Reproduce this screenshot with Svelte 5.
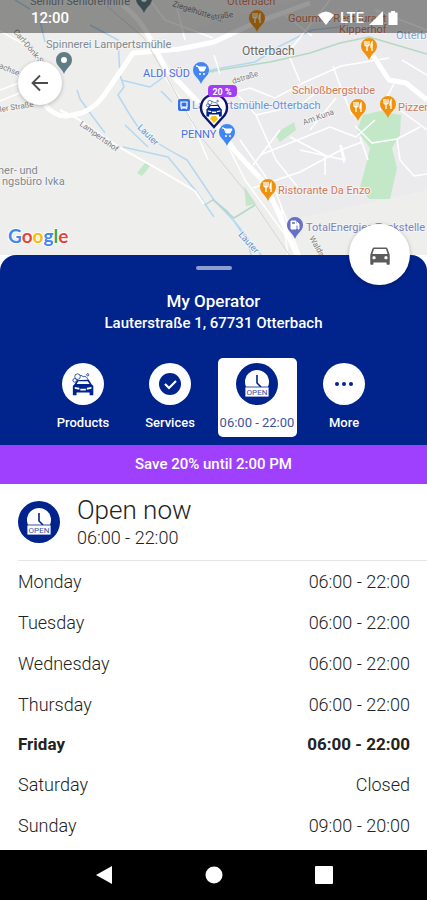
<script>
  const days = [
    { name: 'Monday', hours: '06:00 - 22:00' },
    { name: 'Tuesday', hours: '06:00 - 22:00' },
    { name: 'Wednesday', hours: '06:00 - 22:00' },
    { name: 'Thursday', hours: '06:00 - 22:00' },
    { name: 'Friday', hours: '06:00 - 22:00' },
    { name: 'Saturday', hours: 'Closed' },
    { name: 'Sunday', hours: '09:00 - 20:00' }
  ];

  const today = 'Friday';

  const tabs = [
    { id: 'products', label: 'Products' },
    { id: 'services', label: 'Services' },
    { id: 'hours', label: '06:00 - 22:00' },
    { id: 'more', label: 'More' }
  ];

  let active = $state('hours');

  // x / y is the tip of the pin
  const pins = [
    { x: 144, y: 13, kind: 'place' },
    { x: 64, y: 74, kind: 'place' },
    { x: 257, y: 32, kind: 'food' },
    { x: 369, y: 60, kind: 'food' },
    { x: 358, y: 121, kind: 'food' },
    { x: 388, y: 118, kind: 'food' },
    { x: 268, y: 201, kind: 'food' },
    { x: 201, y: 84, kind: 'shop' },
    { x: 227, y: 146, kind: 'shop' },
    { x: 295, y: 239, kind: 'fuel' }
  ];

  const pinColors = {
    place: '#607d86',
    food: '#f0920e',
    shop: '#4285f4',
    fuel: '#6570c6'
  };

  const labels = [
    { x: 30, y: 5, text: 'Senluri Seniorenhilfe', kind: 'place' },
    { x: 46, y: 48, text: 'Spinnerei Lampertsmühle', kind: 'place' },
    { x: -2, y: 174, text: 'ner- und', kind: 'place' },
    { x: 2, y: 185, text: 'ngsbüro Ivka', kind: 'place' },
    { x: 227, y: 5, text: 'Otterbach', kind: 'food' },
    { x: 288, y: 22, text: 'Gourmet Restaurant', kind: 'food' },
    { x: 339, y: 33, text: 'Kipperhof', kind: 'food' },
    { x: 292, y: 94, text: 'Schloßbergstube', kind: 'food' },
    { x: 398, y: 111, text: 'Pizzeria', kind: 'food' },
    { x: 278, y: 194, text: 'Ristorante Da Enzo', kind: 'food' },
    { x: 143, y: 77, text: 'ALDI SÜD', kind: 'shop' },
    { x: 181, y: 138, text: 'PENNY', kind: 'shop' },
    { x: 192, y: 109, text: 'Lampertsmühle-Otterbach', kind: 'station' },
    { x: 306, y: 231, text: 'TotalEnergies Tankstelle', kind: 'fuel' },
    { x: 396, y: 39, text: 'Otterbach', kind: 'stream' }
  ];

  const streets = [
    { x: 13, y: 32, angle: 50, text: 'Carl-Dönk-Str.' },
    { x: -6, y: 66, angle: 22, text: 'Sachse' },
    { x: -6, y: 113, angle: -9, text: 'eiler Straße' },
    { x: 79, y: 125, angle: 36, text: 'Lampertshof' },
    { x: 172, y: 6, angle: 18, text: 'Ziegelhütterstr.' },
    { x: 233, y: 84, angle: -18, text: 'dstraße' },
    { x: 304, y: 125, angle: -20, text: 'Am Kuna' },
    { x: 309, y: 238, angle: 60, text: 'Waldstr' },
    { x: 211, y: 20, angle: -8, text: 'straße' }
  ];
</script>

{#snippet openIcon()}
  <svg class="open-icon" viewBox="0 0 42 42" aria-hidden="true">
    <circle cx="21" cy="21" r="21" fill="#00238c" />
    <circle cx="21" cy="19" r="12" fill="#fff" />
    <path d="M21 12v8l4 4" fill="none" stroke="#00238c" stroke-width="1.6" />
    <rect x="9" y="24" width="24" height="10" fill="#fff" stroke="#00238c" stroke-width=".8" />
    <text x="21" y="32" text-anchor="middle" font-size="8" fill="#3a52a6">OPEN</text>
  </svg>
{/snippet}

{#snippet washIcon()}
  <path
    fill="#00238c"
    fill-rule="evenodd"
    d="M4 13l3-5h12l3 5 2 2v10h-4v-3H6v3H2V15zM6 13h14l-2-3H8zM4 16v2l5 1v-2zM22 16v2l-5 1v-2zM10 18v2h6v-2z"
  />
  <path d="M7 9q-2-3 1-4 3-3 5 0 4-1 5 3" fill="#fff" stroke="#00238c" stroke-width=".8" />
  <circle cx="7" cy="5" r="3" fill="#fff" stroke="#00238c" stroke-width=".8" />
  <circle cx="4" cy="9" r="2" fill="#fff" stroke="#00238c" stroke-width=".8" />
  <circle cx="18" cy="3" r="1.2" fill="none" stroke="#00238c" stroke-width=".8" />
{/snippet}

<div class="screen">
  <section class="map-area">
    <svg class="map" viewBox="0 0 427 255" preserveAspectRatio="xMidYMin slice" role="img" aria-label="Map of Otterbach">
      <rect width="427" height="255" fill="#eeeeed" />
      <path d="M150 40 300 0H427V190L290 220 228 140z" fill="#ebebed" />

      <g fill="#c3e8c8">
        <path d="M363 115 380 111 401 115 400 135 392 148 397 168 390 199 369 199 360 187 366 165 370 148 357 130z" />
        <path d="M276 136 281 130 294 122 296 130 280 142z" />
        <path d="M145 163l5 3-8 10-5-3z" />
        <path d="M244 186l12 18-10 2z" />
      </g>

      <g class="water">
        <path d="M15 0 30 9M40 20 45 42M90 25 118 40 120 75 124 87 118 95 130 115 142 133" />
        <path d="M121 80 150 87 165 76M161 91 172 102M77 90 80 99 93 117 105 133M125 125 148 147" />
        <path d="M142 133Q158 144 187 160L214 200 235 222 262 256M123 147 168 157 196 191 214 217M214 200 227 211 247 240 252 258" />
        <path d="M205 71 255 62 280 46 312 30 340 27 360 10M200 70 214 72" />
      </g>

      <g class="trail">
        <path d="M207 72 270 62 310 53 340 43 369 37 427 54M205 205 214 199M213 200 234 218 255 205" />
      </g>

      <g class="lane">
        <path d="M0 66 22 77M0 90 27 80M0 101 22 92M150 0 165 20 213 38M185 40 175 0M160 70 185 105 208 160M225 140 245 180 300 255" />
        <path d="M0 31 30 48 45 70M214 55 220 74M290 50 330 0M375 10 427 30M285 15 312 36" />
        <path d="M214 98 250 88 275 98 305 82 341 66 389 58M290 58 300 82M333 66 341 88 352 115M300 255 275 190 240 140" />
        <path d="M235 92 256 115 276 160 300 190M256 115 300 105 320 90M260 155 330 127 356 137 375 120M300 150 345 160 341 145M290 137 325 155 325 175" />
        <path d="M253 188 300 172 341 150 362 142M310 130 336 98M355 126 372 143 397 139 420 127M397 139 400 160 414 176 427 174" />
        <path d="M340 145 344 163M360 137 368 160M281 205 288 255M253 165 280 130M400 110 427 130M394 84 380 110M402 60 427 75" />
      </g>

      <g class="road">
        <path d="M116 0Q142 18 153 45L166 69 208 112 235 151 262 180 275 205 298 258" />
        <path d="M45 105Q55 117 67 116L82 113Q97 107 107 91L133 53 157 51 180 49 214 42 250 25 310 3" />
        <path d="M372 54 389 80 406 83 427 100" />
        <path class="thin" d="M60 110 78 119 119 147 163 172 195 191 204 204" />
      </g>
      <path d="M100 0 144 38 201 137 250 197 290 256" fill="none" stroke="#d3d5d6" stroke-width="1" />

      {#each streets as s}
        <text class="street" transform="translate({s.x} {s.y}) rotate({s.angle})">{s.text}</text>
      {/each}
      <text class="river" transform="translate(137 128) rotate(45)">Lauter</text>
      <text class="river" transform="translate(238 235) rotate(48)">Lauter</text>

      {#each labels as l}
        <text class="label {l.kind}" x={l.x} y={l.y}>{l.text}</text>
      {/each}
      <text class="label town" x="242" y="55">Otterbach</text>

      <g transform="translate(178 99)">
        <rect width="12" height="12" rx="2" fill="#3470e8" />
        <path d="M3 3h6v5H3zM3 10l1-1h4l1 1" fill="none" stroke="#fff" stroke-width="1.2" />
      </g>

      {#each pins as p}
        <g transform="translate({p.x} {p.y})">
          <path d="M0 0C-2-6-8-8-8-14A8 8 0 1 1 8-14C8-8 2-6 0 0z" fill={pinColors[p.kind]} />
          {#if p.kind === 'place'}
            <circle cy="-14" r="3" fill="#fff" />
          {:else if p.kind === 'food'}
            <path d="M-4-19v4q0 1 2 1t2-1v-4M-2-19v10M3-9v-9q-1 1-1 5h1" fill="none" stroke="#fff" stroke-width="1.3" />
          {:else if p.kind === 'shop'}
            <path d="M-5-18h2l2 5h4l2-4h-7z" fill="#fff" stroke="#fff" />
            <circle cx="-1" cy="-10" r="1" fill="#fff" />
            <circle cx="3" cy="-10" r="1" fill="#fff" />
          {:else}
            <path d="M-4-10v-8h5v8zM1-14h2v4h1v-5l-2-2" fill="#fff" stroke="#fff" />
            <path d="M-3-16h3" stroke="#6570c6" stroke-width="1.5" />
          {/if}
        </g>
      {/each}

      <g transform="translate(214 127)">
        <path d="M0 0-9-10A13 13 0 1 1 9-10z" fill="#fff" stroke="#0b1470" stroke-width="2.4" />
        <g transform="translate(-9 -28) scale(.7)">
          {@render washIcon()}
        </g>
        <path d="M0-4-4-8l2-3h4l2 3z" fill="#f4c613" />
      </g>
      <rect x="208" y="85" width="29" height="12" rx="4" fill="#a33cf5" />
      <text class="discount" x="222" y="95">20 %</text>

      <text class="google" x="8" y="243"><tspan fill="#4285f4">G</tspan><tspan fill="#ea4335">o</tspan><tspan fill="#fbbc05">o</tspan><tspan fill="#4285f4">g</tspan><tspan fill="#34a853">l</tspan><tspan fill="#ea4335">e</tspan></text>
    </svg>

    <div class="status-bar">
      <span>12:00</span>
      <div class="status-icons">
        <svg width="18" height="14" viewBox="0 0 18 14" aria-hidden="true"><path d="M9 14 1 4Q9-3 17 4z" fill="#fff" /></svg>
        <span>LTE</span>
        <svg width="14" height="14" viewBox="0 0 14 14" aria-hidden="true"><path d="M14 0v14H0z" fill="#fff" /></svg>
        <svg width="10" height="14" viewBox="0 0 10 14" aria-hidden="true"><path d="M3 0h4v1.500h2.500V14h-9V1.500H3z" fill="#fff" /></svg>
      </div>
    </div>

    <button class="round back" aria-label="Back">
      <svg width="20" height="20" viewBox="0 0 20 20" aria-hidden="true">
        <path d="M18 10H3M10 2.500 2.500 10 10 17.500" fill="none" stroke="#4c4c4c" stroke-width="1.8" />
      </svg>
    </button>
    <button class="round drive" aria-label="Directions">
      <svg width="26" height="26" viewBox="0 0 24 24" aria-hidden="true">
        <path
          fill="#5c5c5c"
          d="M18.920 6.010C18.720 5.420 18.160 5 17.500 5h-11c-.66 0-1.210.42-1.420 1.010L3 12v8c0 .55.45 1 1 1h1c.55 0 1-.45 1-1v-1h12v1c0 .55.45 1 1 1h1c.55 0 1-.45 1-1v-8l-2.080-5.990zM6.500 16c-.83 0-1.500-.67-1.500-1.500S5.670 13 6.500 13s1.500.67 1.500 1.500S7.330 16 6.500 16zm11 0c-.83 0-1.500-.67-1.500-1.500s.67-1.500 1.500-1.500 1.500.67 1.500 1.500-.67 1.500-1.500 1.500zM5 11l1.500-4.500h11L19 11H5z"
        />
      </svg>
    </button>
  </section>

  <section class="sheet">
    <div class="handle"></div>
    <h1>My Operator</h1>
    <p class="address">Lauterstraße 1, 67731 Otterbach</p>

    <nav class="tabs">
      {#each tabs as tab}
        <button class="tab" class:active={active === tab.id} onclick={() => (active = tab.id)}>
          {#if tab.id === 'hours'}
            {@render openIcon()}
          {:else}
            <svg class="tab-icon" viewBox="0 0 42 42" aria-hidden="true">
              <circle cx="21" cy="21" r="21" fill="#fff" />
              {#if tab.id === 'products'}
                <g transform="translate(9 9) scale(.93)">
                  {@render washIcon()}
                </g>
              {:else if tab.id === 'services'}
                <circle cx="21" cy="21" r="11" fill="#00238c" />
                <path d="M16 21l4 4 7-7" fill="none" stroke="#fff" stroke-width="2.2" />
              {:else}
                <g fill="#00238c">
                  <circle cx="14" cy="21" r="2" />
                  <circle cx="21" cy="21" r="2" />
                  <circle cx="28" cy="21" r="2" />
                </g>
              {/if}
            </svg>
          {/if}
          <span>{tab.label}</span>
        </button>
      {/each}
    </nav>
  </section>

  <p class="offer">Save 20% until 2:00 PM</p>

  <section class="hours">
    <div class="now">
      {@render openIcon()}
      <div>
        <h2>Open now</h2>
        <p>06:00 - 22:00</p>
      </div>
    </div>

    <table>
      <tbody>
        {#each days as day}
          <tr class:today={day.name === today}>
            <th scope="row">{day.name}</th>
            <td>{day.hours}</td>
          </tr>
        {/each}
      </tbody>
    </table>
  </section>

  <footer class="system-nav">
    <button aria-label="System back">
      <svg width="18" height="18" viewBox="0 0 18 18" aria-hidden="true"><path d="M17 0v18L1 9z" fill="#fff" /></svg>
    </button>
    <button aria-label="Home">
      <svg width="18" height="18" viewBox="0 0 18 18" aria-hidden="true"><circle cx="9" cy="9" r="8.500" fill="#fff" /></svg>
    </button>
    <button aria-label="Recent apps">
      <svg width="18" height="18" viewBox="0 0 18 18" aria-hidden="true"><rect width="18" height="18" rx="1" fill="#fff" /></svg>
    </button>
  </footer>
</div>

<style>
  :global(body) {
    margin: 0;
    background: #fff;
  }

  .screen {
    display: flex;
    flex-direction: column;
    min-height: 100vh;
    font-family: Roboto, 'Liberation Sans', sans-serif;
    color: #222;
  }

  h1,
  h2,
  p {
    margin: 0;
  }

  button {
    padding: 0;
    border: 0;
    background: none;
    font: inherit;
    cursor: pointer;
  }

  /* Map */
  .map-area {
    position: relative;
    height: 255px;
  }

  .map {
    display: block;
    width: 100%;
    height: 100%;
  }

  .water path,
  .trail path,
  .lane path,
  .road path {
    fill: none;
    stroke-linejoin: round;
  }

  .water path {
    stroke: #b5d8f2;
    stroke-width: 1.5px;
  }

  .trail path {
    stroke: #b5d8c3;
    stroke-width: 1.5px;
  }

  .lane path {
    stroke: #fff;
    stroke-width: 1.5px;
  }

  .road path {
    stroke: #fff;
    stroke-width: 5px;
  }

  .road .thin {
    stroke-width: 2px;
  }

  .label,
  .street,
  .river {
    font-size: 11px;
    stroke: #f4f4f4;
    stroke-width: 2px;
    paint-order: stroke;
  }

  .place {
    fill: #7d8a90;
  }

  .food {
    fill: #d17a55;
  }

  .shop {
    fill: #4a6fe0;
  }

  .station {
    fill: #6a90de;
  }

  .fuel {
    fill: #7b83c2;
  }

  .stream {
    fill: #78a9dc;
  }

  .town {
    font-size: 12px;
    fill: #66696c;
  }

  .street {
    font-size: 8px;
    fill: #7c7c7c;
  }

  .river {
    font-size: 9px;
    fill: #5d93cc;
  }

  .discount {
    font-size: 9px;
    font-weight: 700;
    fill: #fff;
    text-anchor: middle;
  }

  .google {
    font-family: Lato, sans-serif;
    font-size: 19px;
    font-weight: 700;
    stroke: #fff;
    stroke-width: 2px;
    paint-order: stroke;
  }

  .status-bar {
    position: absolute;
    top: 0;
    left: 0;
    right: 0;
    display: flex;
    align-items: center;
    justify-content: space-between;
    height: 33px;
    padding: 2px 29px 0 31px;
    box-sizing: border-box;
    background: rgba(0, 0, 0, 0.4);
    color: #fff;
    font-size: 15px;
    font-weight: 500;
  }

  .status-icons {
    display: flex;
    align-items: center;
    gap: 5px;
  }

  .round {
    position: absolute;
    display: flex;
    align-items: center;
    justify-content: center;
    border-radius: 50%;
    background: #fff;
    box-shadow: 0 1px 4px rgba(0, 0, 0, 0.25);
  }

  .back {
    top: 61px;
    left: 18px;
    width: 44px;
    height: 44px;
  }

  .drive {
    right: 17px;
    bottom: -30px;
    z-index: 1;
    width: 61px;
    height: 61px;
  }

  /* Bottom sheet */
  .sheet {
    display: flex;
    flex-direction: column;
    align-items: center;
    padding: 11px 16px 8px;
    border-radius: 16px 16px 0 0;
    background: #00238c;
    color: #fff;
    text-align: center;
  }

  .handle {
    width: 36px;
    height: 4px;
    margin-bottom: 20px;
    border-radius: 2px;
    background: #8f9dd0;
  }

  h1 {
    font-size: 17px;
    font-weight: 500;
    line-height: 22px;
  }

  .address {
    font-size: 15px;
    font-weight: 500;
    line-height: 22px;
  }

  .tabs {
    display: flex;
    gap: 8px;
    margin-top: 24px;
  }

  .tab {
    display: flex;
    flex-direction: column;
    align-items: center;
    gap: 9px;
    width: 79px;
    height: 79px;
    padding-top: 5px;
    border-radius: 5px;
    color: #fff;
    font-size: 13px;
    font-weight: 500;
    line-height: 18px;
    white-space: nowrap;
  }

  .tab.active {
    background: #fff;
    color: #3d549f;
    font-weight: 400;
  }

  .tab-icon,
  .open-icon {
    flex: none;
    width: 42px;
    height: 42px;
  }

  .offer {
    background: #a040ff;
    color: #fff;
    font-size: 15px;
    font-weight: 500;
    line-height: 39px;
    text-align: center;
  }

  /* Opening hours */
  .hours {
    flex: 1;
    padding: 0 17px 0 18px;
  }

  .now {
    display: flex;
    align-items: center;
    gap: 17px;
    height: 76px;
    margin-right: -17px;
    border-bottom: 1px solid #e6e6e6;
  }

  h2 {
    font-size: 26px;
    font-weight: 300;
    line-height: 32px;
  }

  .now p {
    font-size: 18px;
    font-weight: 300;
    line-height: 24px;
  }

  table {
    width: 100%;
    height: 285px;
    border-collapse: collapse;
    font-size: 18px;
  }

  th,
  td {
    padding: 0;
    font-weight: 300;
    text-align: left;
  }

  td {
    text-align: right;
  }

  .today th,
  .today td {
    font-size: 17px;
    font-weight: 700;
  }

  .system-nav {
    display: flex;
    align-items: center;
    justify-content: center;
    gap: 92px;
    height: 50px;
    background: #000;
  }

  .system-nav button {
    display: flex;
  }
</style>
